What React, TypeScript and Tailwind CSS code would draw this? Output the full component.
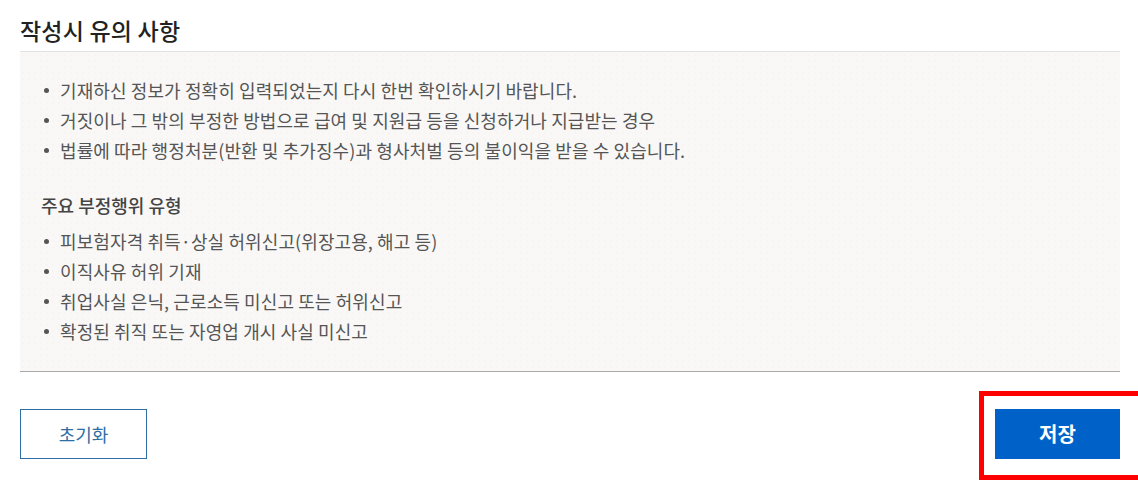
const notice = [
  "기재하신 정보가 정확히 입력되었는지 다시 한번 확인하시기 바랍니다.",
  "거짓이나 그 밖의 부정한 방법으로 급여 및 지원급 등을 신청하거나 지급받는 경우",
  "법률에 따라 행정처분(반환 및 추가징수)과 형사처벌 등의 불이익을 받을 수 있습니다.",
];

const fraudTypes = [
  "피보험자격 취득·상실 허위신고(위장고용, 해고 등)",
  "이직사유 허위 기재",
  "취업사실 은닉, 근로소득 미신고 또는 허위신고",
  "확정된 취직 또는 자영업 개시 사실 미신고",
];

function BulletList({ items }: { items: string[] }) {
  return (
    <ul>
      {items.map((item) => (
        <li key={item} className="flex h-[30px] items-center">
          <span className="mr-[11px] h-[5px] w-[5px] rounded-full bg-[#555]" />
          <span className="tracking-[0.1px]">{item}</span>
        </li>
      ))}
    </ul>
  );
}

export default function App() {
  return (
    <div className="relative h-[497px] w-[1138px] overflow-hidden bg-white pl-[20px] pr-[18px] font-['Noto_Sans_CJK_KR','Noto_Sans',sans-serif]">
      <h2 className="flex h-[51px] items-end pb-[4px] text-[23px] font-medium tracking-[0.2px] text-[#222]">
        작성시 유의 사항
      </h2>

      {/* Notice panel */}
      <section className="h-[321px] border-t border-b border-t-[#e2e2e2] border-b-[#a8a8a8] bg-[#f9f8f7] bg-[radial-gradient(#f6f5f3_1.5px,transparent_1.5px)] bg-[length:6px_6px] pl-[24px] pt-[23px] text-[18px] leading-[30px] text-[#555]">
        <BulletList items={notice} />
        <h3 className="-ml-[3px] mb-[6px] mt-[25px] h-[30px] text-[18px] font-medium text-[#444]">
          주요 부정행위 유형
        </h3>
        <BulletList items={fraudTypes} />
      </section>

      {/* Actions */}
      <div className="mt-[37px] flex justify-between">
        <button className="h-[50px] w-[127px] border border-[#2f6ea5] text-[18px] text-[#2f6ea5]">
          초기화
        </button>
        <button className="h-[50px] w-[125px] bg-[#0062c9] text-[20px] font-bold text-white">
          저장
        </button>
      </div>

      {/* Red highlight box */}
      <div className="absolute left-[979px] top-[391px] h-[89px] w-[170px] border-[5px] border-[#f00]" />
    </div>
  );
}
